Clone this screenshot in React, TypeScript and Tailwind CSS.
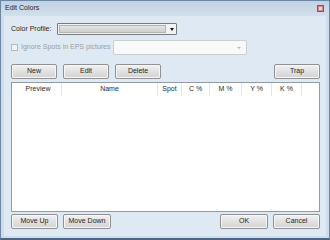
import React from "react";

const FONT = { fontFamily: '"Liberation Sans", Arial, sans-serif' };

function Btn({ label, w = "w-[46px]" }: { label: string; w?: string }) {
  return (
    <div
      className={`${w} h-[15px] flex items-center justify-center rounded-[2px] border border-[#8f9194] bg-gradient-to-b from-[#f1f1f1] via-[#e1e1e1] to-[#d3d3d3] text-[7px] text-[#1e1e1e] shadow-[inset_0_0_0_1px_#f7f7f7]`}
    >
      {label}
    </div>
  );
}

const COLUMNS = [
  { name: "Preview", w: "w-[47px]" },
  { name: "Name", w: "w-[96px]" },
  { name: "Spot", w: "w-[24px]" },
  { name: "C %", w: "w-[28px]" },
  { name: "M %", w: "w-[32px]" },
  { name: "Y %", w: "w-[30px]" },
  { name: "K %", w: "w-[30px]" },
];

export default function App() {
  return (
    <div
      className="w-[330px] h-[240px] flex flex-col bg-[#cfdcea] border border-[#6c87a3] border-b-[2px] border-b-[#4b6783] overflow-hidden"
      style={FONT}
    >
      {/* title bar */}
      <div className="h-[15px] shrink-0 flex items-center pl-[4px] pr-[5px] bg-gradient-to-b from-[#c2d2e3] to-[#d2dfec]">
        <span className="text-[7px] text-[#1b2533]">Edit Colors</span>
        <div className="ml-auto w-[7px] h-[7px] border border-[#9b4b4b] bg-[#d88583] flex items-center justify-center">
          <div className="w-[3px] h-[3px] bg-[#f3d0cf]" />
        </div>
      </div>

      {/* client */}
      <div className="flex-1 mx-[3px] mb-[2px] bg-[#dfe9f3] flex flex-col pt-[7px] pl-[7px] pr-[6px] pb-[6px]">
        <div className="h-[12px] flex items-center">
          <div className="w-[46px] text-[7px] text-[#1e1e1e]">Color Profile:</div>
          <div className="w-[120px] h-[12px] flex items-stretch border border-[#7a7a7a] bg-[#f2f2f2] rounded-[1px]">
            <div className="flex-1 m-[1px] border border-[#b3b3b3] bg-gradient-to-b from-[#e4e4e4] to-[#cfcfcf]" />
            <div className="w-[9px] flex items-center justify-center">
              <div className="w-0 h-0 border-l-[2px] border-r-[2px] border-t-[3px] border-l-transparent border-r-transparent border-t-[#111]" />
            </div>
          </div>
        </div>

        <div className="h-[15px] mt-[5px] flex items-center">
          <div className="w-[102px] flex items-center">
            <div className="w-[7px] h-[7px] border border-[#b5b9be] bg-[#f3f3f3] mr-[3px]" />
            <span className="text-[7px] text-[#9aa0a6] whitespace-nowrap">Ignore Spots in EPS pictures</span>
          </div>
          <div className="w-[134px] h-[15px] flex items-center justify-end pr-[5px] border border-[#cbcfd3] bg-[#f9f9f9] rounded-[2px]">
            <div className="w-0 h-0 border-l-[2px] border-r-[2px] border-t-[2px] border-l-transparent border-r-transparent border-t-[#b4b4b4]" />
          </div>
        </div>

        <div className="mt-[9px] flex items-center">
          <div className="flex gap-[6px]">
            <Btn label="New" />
            <Btn label="Edit" />
            <Btn label="Delete" />
          </div>
          <div className="ml-auto">
            <Btn label="Trap" />
          </div>
        </div>

        <div className="mt-[3px] h-[130px] border border-[#939ba5] bg-white flex flex-col">
          <div className="h-[13px] flex items-stretch text-[7px] text-[#2b2b2b] pl-[3px]">
            {COLUMNS.map((c) => (
              <div key={c.name} className={`${c.w} flex items-center justify-center border-r border-[#e3e5e8]`}>
                {c.name}
              </div>
            ))}
          </div>
        </div>

        <div className="mt-[2px] flex items-center">
          <div className="flex gap-[5px]">
            <Btn label="Move Up" w="w-[47px]" />
            <Btn label="Move Down" w="w-[48px]" />
          </div>
          <div className="ml-auto flex gap-[5px]">
            <Btn label="OK" w="w-[48px]" />
            <Btn label="Cancel" w="w-[47px]" />
          </div>
        </div>
      </div>
    </div>
  );
}
